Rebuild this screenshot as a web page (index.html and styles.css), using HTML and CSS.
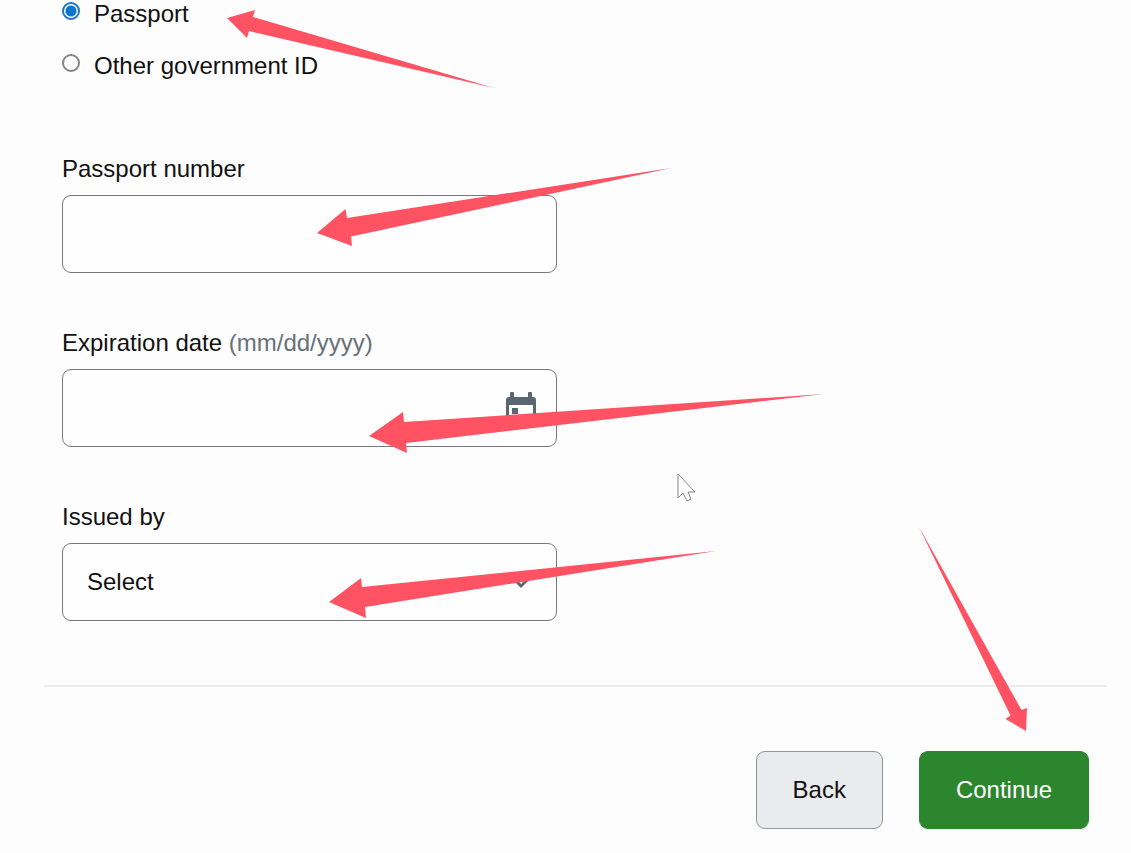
FILE: index.html
```html
<!DOCTYPE html>
<html lang="en">
<head>
	<meta charset="UTF-8">
	<meta name="viewport" content="width=device-width, initial-scale=1">
	<title>Passport details</title>
	<link rel="stylesheet" href="styles.css">
</head>
<body>

	<form class="id-form" action="#">

		<div class="form-body">

			<!-- id type -->
			<div class="id-type" role="radiogroup" aria-label="ID type">
				<label class="radio"><input type="radio" name="idtype" checked><span>Passport</span></label>
				<label class="radio"><input type="radio" name="idtype"><span>Other government ID</span></label>
				<svg class="arrow arrow-type" width="267" height="78" aria-hidden="true">
					<polygon points="0,8 28,0 26,7 267,78 22,21 20,28"/>
				</svg>
			</div>

			<!-- passport number -->
			<div class="field">
				<label for="number">Passport number</label>
				<div class="control">
					<input type="text" id="number">
					<svg class="arrow arrow-number" width="354" height="78" aria-hidden="true">
						<polygon points="0,65 28.5,41 30,50 354,0 34,68.5 35,78"/>
					</svg>
				</div>
			</div>

			<!-- expiration date -->
			<div class="field">
				<label for="expires">Expiration date <span class="hint">(mm/dd/yyyy)</span></label>
				<div class="control">
					<input type="text" id="expires">
					<svg class="icon icon-calendar" width="30" height="34" viewBox="0 0 30 34" aria-hidden="true">
						<path fill-rule="evenodd" d="M5 0h2q1 0 1 1v4h14V1q0-1 1-1h2q1 0 1 1v4h1q3 0 3 3v23q0 3-3 3H3q-3 0-3-3V8q0-3 3-3h1V1q0-1 1-1zM3 13v18h24V13zM6 16h6v6H6z"/>
					</svg>
					<svg class="arrow arrow-expires" width="455" height="59" aria-hidden="true">
						<polygon points="0,42 34,18 35,28 455,0 37,49 38,59"/>
					</svg>
				</div>
			</div>

			<!-- issued by -->
			<div class="field">
				<label for="issued">Issued by</label>
				<div class="control">
					<select id="issued">
						<option>Select</option>
					</select>
					<svg class="icon icon-chevron" width="18" height="12" viewBox="0 0 18 12" aria-hidden="true">
						<path d="M0 2l2-2 7 7 7-7 2 2-9 9z"/>
					</svg>
					<svg class="arrow arrow-issued" width="387" height="67" aria-hidden="true">
						<polygon points="0,51 32,27 33,36 387,0 36,56 37,67"/>
					</svg>
				</div>
			</div>

		</div>

		<!-- buttons -->
		<div class="actions">
			<button type="button" class="btn btn-back">Back</button>
			<button type="submit" class="btn btn-continue">Continue</button>
			<svg class="arrow arrow-continue" width="108" height="204" aria-hidden="true">
				<polygon points="107,204 108,181 102.5,183 0,0 91.5,188.5 86.5,192"/>
			</svg>
		</div>

	</form>

	<svg class="cursor" width="20" height="30" viewBox="0 0 20 30" aria-hidden="true">
		<path d="M1 1v24l5-5 4 8 4-2-3-7h7z"/>
	</svg>

</body>
</html>
```

FILE: styles.css
```css
*{ box-sizing: border-box; }
body{
	position: relative;
	margin: 0;
	padding: 0 24px 24px 44px;
	background: #fdfdfd;
	color: #111;
	font-family: "Liberation Sans", Arial, sans-serif;
	font-size: 24px;
	line-height: 28px;
}
input, select, button{
	margin: 0;
	font: inherit;
	color: inherit;
}

.form-body{
	display: flex;
	flex-direction: column;
	gap: 56px;
	padding: 0 18px 64px;
}

/* radio */
.id-type{
	position: relative;
	display: flex;
	flex-direction: column;
	align-items: flex-start;
	gap: 24px;
	margin-bottom: 19px;
}
.radio{
	display: flex;
	align-items: flex-start;
	gap: 14px;
}
.radio input{
	-webkit-appearance: none;
	appearance: none;
	width: 18px;
	height: 18px;
	margin-top: 2px;
	border: 2px solid #858585;
	border-radius: 50%;
	background: #fff;
}
.radio input:checked{
	border-color: #1976c8;
	background: radial-gradient(circle, #0b75d0 5px, #fff 6px);
}

/* fields */
.field{
	display: flex;
	flex-direction: column;
	gap: 12px;
	max-width: 495px;
}
.hint{ color: #68707a; }
.control{ position: relative; }
.control input,
.control select{
	-webkit-appearance: none;
	appearance: none;
	display: block;
	width: 100%;
	height: 78px;
	padding: 0 24px;
	border: 1px solid #75787c;
	border-radius: 9px;
	background: #fefefe;
}
.icon{
	position: absolute;
	fill: #5a6672;
	pointer-events: none;
}
.icon-calendar{ right: 21px; top: 23px; }
.icon-chevron{ right: 27px; top: 34px; }

/* buttons */
.actions{
	position: relative;
	display: flex;
	justify-content: flex-end;
	gap: 36px;
	padding: 64px 18px 0;
	border-top: 2px solid #ececec;
}
.btn{
	height: 78px;
	padding: 0 36px;
	border: 1px solid #8d939a;
	border-radius: 9px;
	background: #eaebef;
}
.btn-continue{
	border-color: #2c862d;
	background: #2c862d;
	color: #fff;
}

/* arrows */
.arrow{
	position: absolute;
	z-index: 10;
	fill: #ff5263;
	pointer-events: none;
}
.arrow-type{ left: 165px; top: 10px; }
.arrow-number{ left: 255px; top: -27px; }
.arrow-expires{ left: 307px; top: 25px; }
.arrow-issued{ left: 267px; top: 8px; }
.arrow-continue{ right: 80px; top: -160px; }

.cursor{
	position: absolute;
	left: 677px;
	top: 473px;
	fill: #fff;
	stroke: #858585;
}
```
